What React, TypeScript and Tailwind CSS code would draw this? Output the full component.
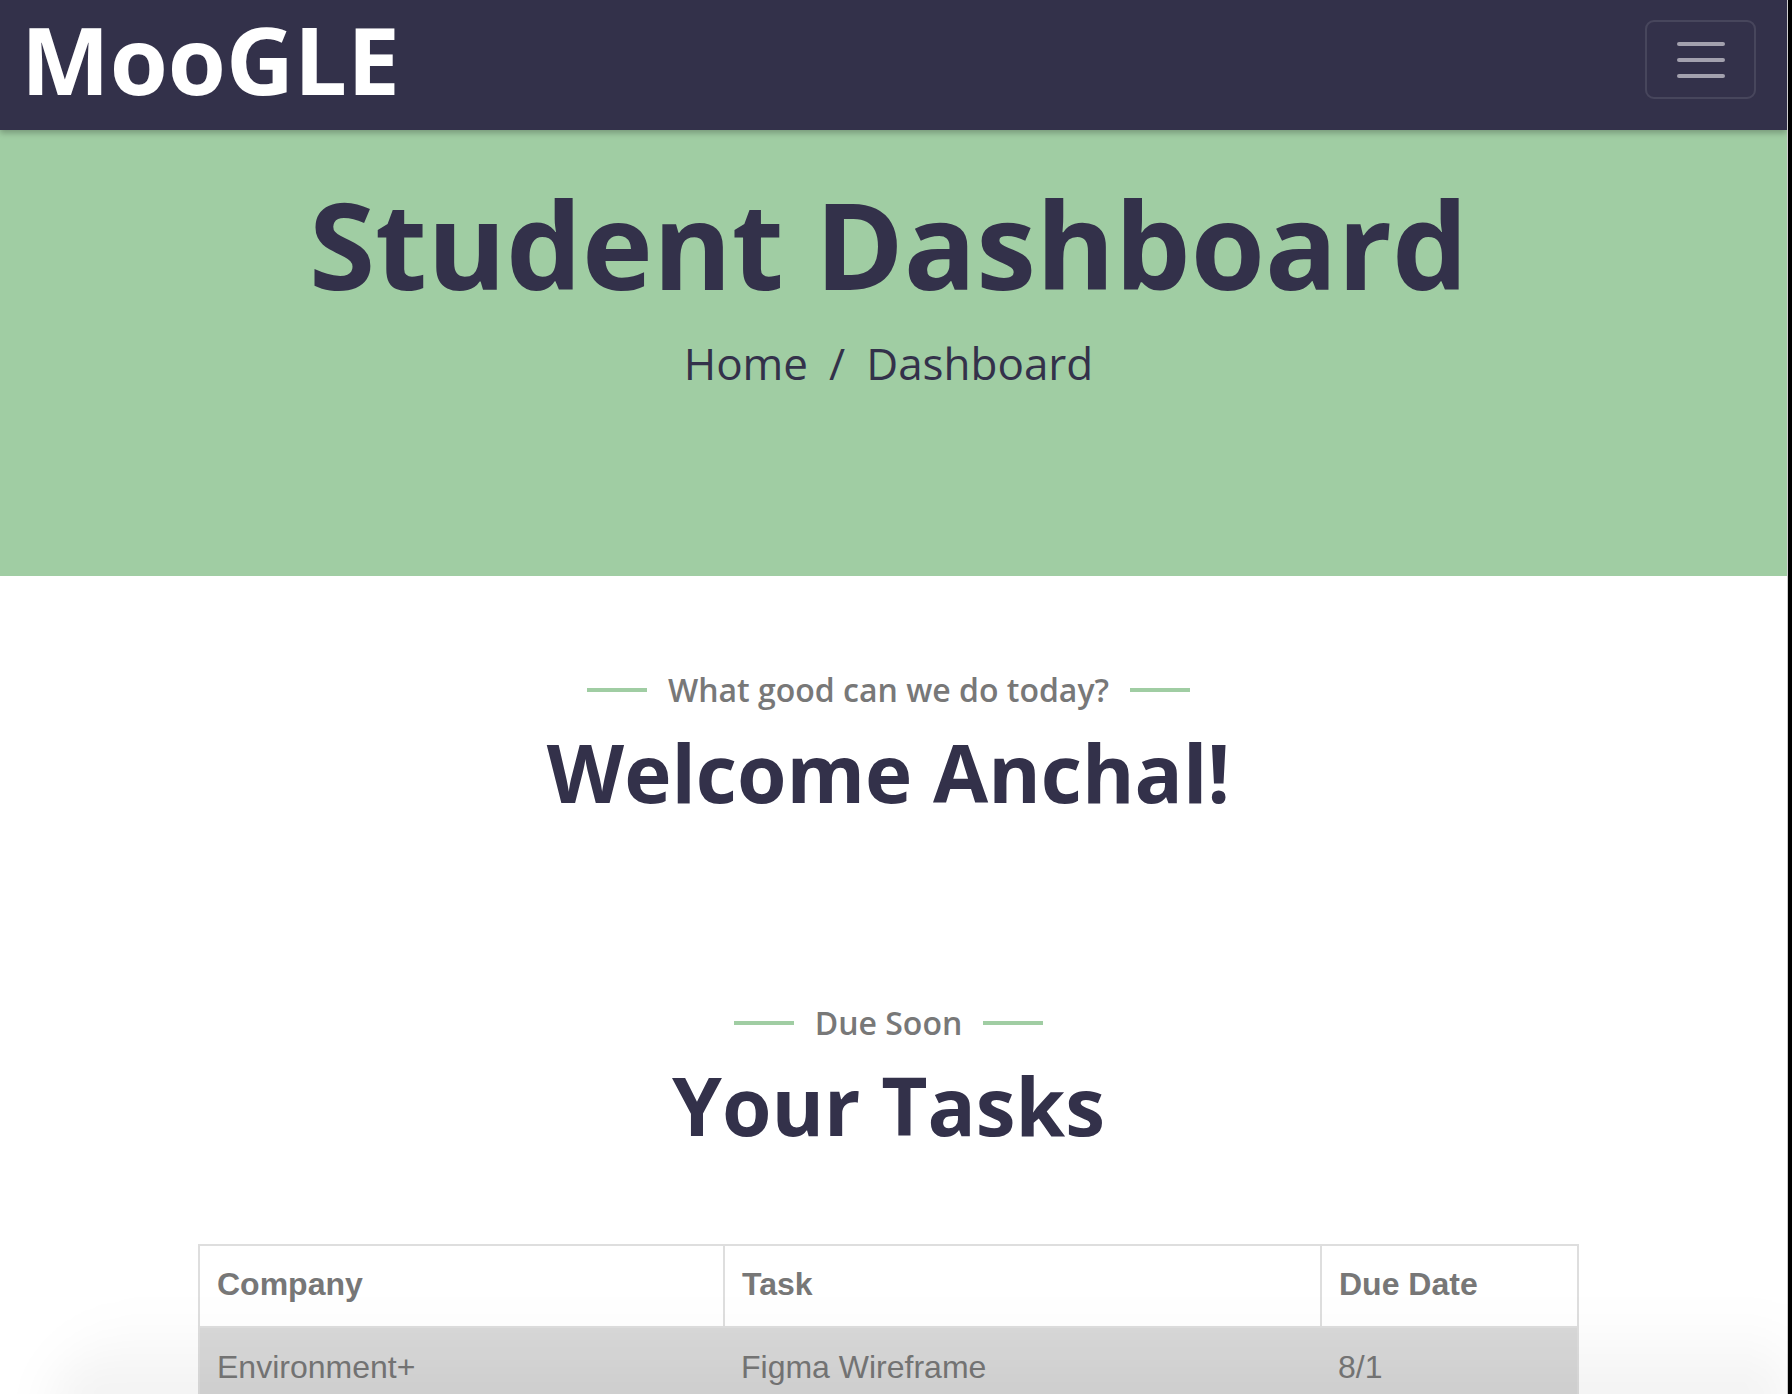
const tasks = [
  { company: "Environment+", task: "Figma Wireframe", due: "8/1" },
  { company: "Environment+", task: "Research Summary", due: "8/4" },
];

const Navbar = () => (
  <nav className="relative z-10 flex h-[130px] justify-between bg-[#33314a] pl-[21px] pr-[31px] shadow-[0_3px_6px_rgba(0,0,0,0.25)]">
    <a
      href="#"
      className="mt-[3px] self-start font-['Open_Sans',sans-serif] text-[94px] font-bold leading-[1.2] text-white"
    >
      MooGLE
    </a>
    <button
      aria-label="Toggle navigation"
      className="mt-[20px] flex h-[79px] w-[111px] flex-col items-center justify-center gap-[12px] self-start rounded-[9px] border-2 border-white/10"
    >
      <span className="block h-[4px] w-[48px] rounded-full bg-[#a3a1ae]" />
      <span className="block h-[4px] w-[48px] rounded-full bg-[#a3a1ae]" />
      <span className="block h-[4px] w-[48px] rounded-full bg-[#a3a1ae]" />
    </button>
  </nav>
);

const Hero = () => (
  <header className="flex h-[446px] flex-col items-center bg-[#a0cda3] pr-[10px] pt-[42px] font-['Open_Sans',sans-serif] text-[#33314a]">
    <h1 className="text-[120px] font-bold leading-[1.2]">Student Dashboard</h1>
    <ol className="mt-[14px] flex text-[44px] leading-[1.5]">
      <li>
        <a href="#">Home</a>
      </li>
      <li className="mx-[21px]">/</li>
      <li>Dashboard</li>
    </ol>
  </header>
);

interface ISectionTitle {
  sub: string;
  title: string;
}

const SectionTitle = ({ sub, title }: ISectionTitle) => (
  <div className="flex flex-col items-center font-['Open_Sans',sans-serif]">
    <div className="flex items-center gap-[21px]">
      <span className="block h-[4px] w-[60px] bg-[#a0cda3]" />
      <span className="text-[32px] font-semibold leading-[1.5] text-[#787878]">
        {sub}
      </span>
      <span className="block h-[4px] w-[60px] bg-[#a0cda3]" />
    </div>
    <h2 className="mt-[10px] text-[80px] font-bold leading-[1.2] text-[#33314a]">
      {title}
    </h2>
  </div>
);

const TaskTable = () => (
  <table className="w-[1379px] table-fixed border-collapse border-2 border-[#dedede] font-['Liberation_Sans',Arial,sans-serif] text-[32px] text-[#777]">
    <colgroup>
      <col className="w-[525px]" />
      <col className="w-[597px]" />
      <col className="w-[257px]" />
    </colgroup>
    <thead>
      <tr className="h-[82px] bg-white">
        <th className="border-2 border-[#dedede] px-[17px] pb-[4px] text-left font-bold">
          Company
        </th>
        <th className="border-2 border-[#dedede] px-[17px] pb-[4px] text-left font-bold">
          Task
        </th>
        <th className="border-2 border-[#dedede] px-[17px] pb-[4px] text-left font-bold">
          Due Date
        </th>
      </tr>
    </thead>
    <tbody>
      {tasks.map((row, i) => (
        <tr
          key={row.task}
          className={i % 2 === 0 ? "h-[82px] bg-[#d9d9d9]" : "h-[82px] bg-white"}
        >
          <td className="px-[17px] pb-[4px]">{row.company}</td>
          <td className="px-[17px] pb-[4px]">{row.task}</td>
          <td className="px-[17px] pb-[4px]">{row.due}</td>
        </tr>
      ))}
    </tbody>
  </table>
);

export default function App() {
  return (
    <div className="relative h-[1394px] overflow-hidden bg-black">
      <div className="mr-[4px] h-full overflow-hidden border-r border-[#cfcfcf] bg-white">
        <Navbar />
        <Hero />
        <main className="flex flex-col items-center pr-[10px] pt-[90px]">
          <SectionTitle sub="What good can we do today?" title="Welcome Anchal!" />
          <div className="mt-[179px]">
            <SectionTitle sub="Due Soon" title="Your Tasks" />
          </div>
          <div className="mt-[91px]">
            <TaskTable />
          </div>
        </main>
      </div>
      <div className="pointer-events-none absolute bottom-[-30px] left-[50px] right-[4px] h-[110px] rounded-tl-[120px] bg-gradient-to-b from-black/0 to-black/[0.07] blur-xl" />
    </div>
  );
}
